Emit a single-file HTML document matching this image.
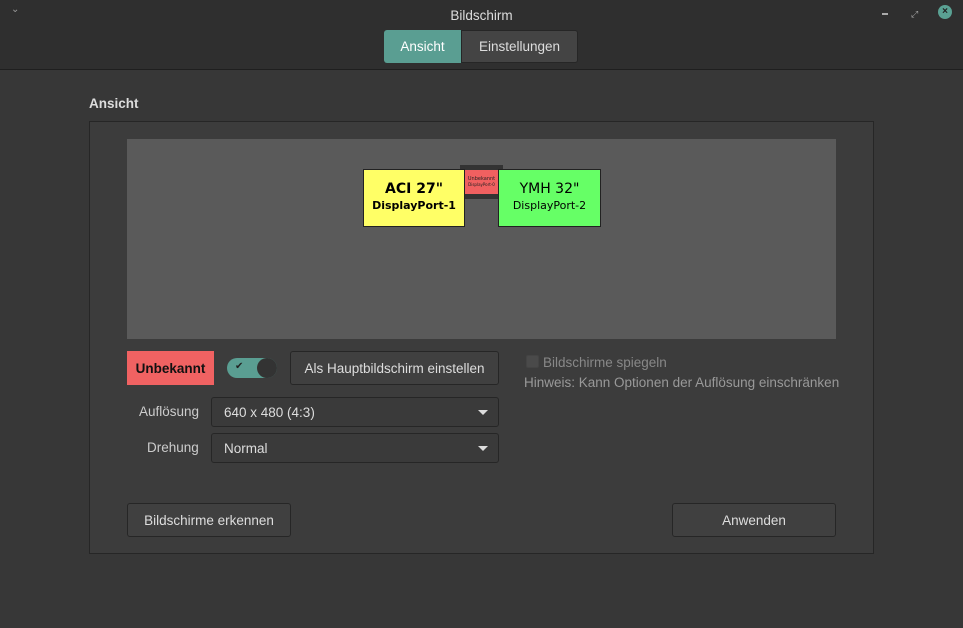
<!DOCTYPE html>
<html><head><style>
*{box-sizing:border-box;margin:0;padding:0}
body{width:963px;height:628px;background:#373737;font-family:"Liberation Sans",sans-serif;font-size:13.5px;color:#ddd;position:relative;overflow:hidden}
.abs{position:absolute}
.title{left:0;top:0;width:963px;height:70px;background:#2f2f2f;border-bottom:1px solid #1f1f1f}
.btn{position:absolute;border:1px solid #262626;background:#404040;border-radius:3px;color:#ddd;display:flex;align-items:center;justify-content:center}
.combo{position:absolute;border:1px solid #262626;background:#3a3a3a;border-radius:3px;color:#ddd;padding-left:12px;display:flex;align-items:center}
.combo:after{content:"";position:absolute;right:10px;top:12px;border-left:5px solid transparent;border-right:5px solid transparent;border-top:5px solid #ddd}
.dv{font-family:"DejaVu Sans",sans-serif}
</style></head><body>
<div class="abs title"></div>
<div class="abs" style="left:11px;top:4px;color:#999;font-size:10px">&#8964;</div>
<div class="abs" style="left:0;width:963px;top:8px;text-align:center">Bildschirm</div>
<div class="abs" style="left:882px;top:13px;width:6px;height:2px;background:#aaa"></div>
<div class="abs" style="left:911px;top:9px;color:#aaa;font-size:9px">&#10530;</div>
<div class="abs" style="left:938px;top:5px;width:14px;height:14px;border-radius:50%;background:#5aa193;color:#222;font-size:10px;text-align:center;line-height:14px;font-weight:bold">×</div>
<div class="abs" style="left:384px;top:30px;width:77px;height:33px;background:#5a9e92;border-radius:3px 0 0 3px;color:#fff;display:flex;align-items:center;justify-content:center">Ansicht</div>
<div class="abs" style="left:461px;top:30px;width:117px;height:33px;background:#444;border:1px solid #262626;border-radius:0 3px 3px 0;display:flex;align-items:center;justify-content:center">Einstellungen</div>
<div class="abs" style="left:89px;top:96px;font-weight:bold">Ansicht</div>
<div class="abs" style="left:89px;top:121px;width:785px;height:433px;background:#3c3c3c;border:1px solid #262626"></div>
<div class="abs" style="left:127px;top:139px;width:709px;height:200px;background:#5a5a5a"></div>
<div class="abs" style="left:460px;top:165px;width:43px;height:34px;background:#333"></div>
<div class="abs dv" style="left:465px;top:170px;width:33px;height:24px;background:#f06060;color:#222;font-size:5px;text-align:center;padding-top:6px;line-height:6px">Unbekannt<br><span style="font-size:4px">DisplayPort-0</span></div>
<div class="abs dv" style="left:363px;top:169px;width:102px;height:58px;background:#ffff66;border:1px solid #222;color:#000;text-align:center;font-weight:bold;padding-top:11px"><div style="font-size:14px">ACI 27"</div><div style="font-size:11px;margin-top:2px">DisplayPort-1</div></div>
<div class="abs dv" style="left:498px;top:169px;width:103px;height:58px;background:#66ff66;border:1px solid #222;color:#000;text-align:center;padding-top:11px"><div style="font-size:14px">YMH 32"</div><div style="font-size:11px;margin-top:2px">DisplayPort-2</div></div>
<div class="abs" style="left:127px;top:351px;width:87px;height:34px;background:#f06262;color:#111;font-weight:bold;display:flex;align-items:center;justify-content:center">Unbekannt</div>
<div class="abs" style="left:227px;top:358px;width:50px;height:20px;border-radius:10px;background:#5a9e92"></div>
<div class="abs" style="left:235px;top:361px;color:#222;font-size:10px">✔</div>
<div class="abs" style="left:257px;top:358px;width:20px;height:20px;border-radius:50%;background:#333"></div>
<div class="btn" style="left:290px;top:351px;width:209px;height:34px">Als Hauptbildschirm einstellen</div>
<div class="abs" style="left:526px;top:355px;width:13px;height:13px;border:1px solid #444;background:#4a4a4a;border-radius:2px"></div>
<div class="abs" style="left:543px;top:355px;color:#888">Bildschirme spiegeln</div>
<div class="abs" style="left:524px;top:375px;color:#999">Hinweis: Kann Optionen der Auflösung einschränken</div>
<div class="abs" style="left:139px;top:404px;color:#ccc">Auflösung</div>
<div class="combo" style="left:211px;top:397px;width:288px;height:30px">640 x 480 (4:3)</div>
<div class="abs" style="left:147px;top:440px;color:#ccc">Drehung</div>
<div class="combo" style="left:211px;top:433px;width:288px;height:30px">Normal</div>
<div class="btn" style="left:127px;top:503px;width:164px;height:34px">Bildschirme erkennen</div>
<div class="btn" style="left:672px;top:503px;width:164px;height:34px">Anwenden</div>
</body></html>
